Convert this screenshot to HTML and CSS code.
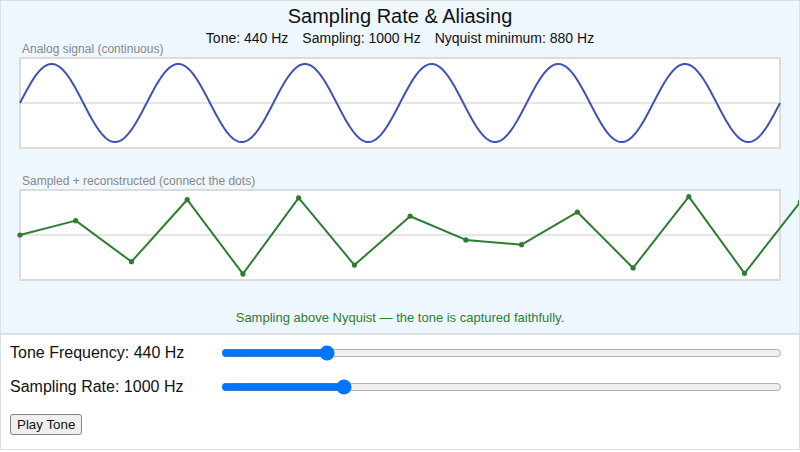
FILE: index.html
```html
<!DOCTYPE html>
<html lang="en">
<head>
  <meta charset="UTF-8" />
  <meta name="viewport" content="width=device-width, initial-scale=1.0"/>
  <title>Sampling Rate &amp; Aliasing</title>
  <link rel="stylesheet" href="styles.css">
</head>
<body>

<div class="app">
  <section class="scope">
    <h1 class="title">Sampling Rate &amp; Aliasing</h1>
    <div class="stats">
      <span>Tone: <span id="toneStat">440</span> Hz</span>
      <span>Sampling: <span id="rateStat">1000</span> Hz</span>
      <span>Nyquist minimum: <span id="nyqStat">880</span> Hz</span>
    </div>

    <div class="plot-label">Analog signal (continuous)</div>
    <svg class="plot" width="798" height="100" viewBox="0 0 798 100">
      <rect class="frame" x="19" y="3" width="760" height="90"/>
      <line class="axis" x1="20" y1="48" x2="778" y2="48"/>
      <path id="analogPath" class="analog" d=""/>
    </svg>

    <div class="plot-label second">Sampled + reconstructed (connect the dots)</div>
    <svg class="plot" width="798" height="100" viewBox="0 0 798 100">
      <rect class="frame" x="19" y="3" width="760" height="90"/>
      <line class="axis" x1="20" y1="48" x2="778" y2="48"/>
      <path id="sampledPath" class="sampled" d=""/>
      <g id="dots" class="dots"></g>
    </svg>

    <p id="verdict" class="verdict ok">Sampling above Nyquist — the tone is captured faithfully.</p>
  </section>

  <section class="controls">
    <div class="control">
      <label for="tone">Tone Frequency: <span id="toneLabel">440</span> Hz</label>
      <input type="range" id="tone" min="100" max="2000" step="10" value="440">
    </div>
    <div class="control">
      <label for="rate">Sampling Rate: <span id="rateLabel">1000</span> Hz</label>
      <input type="range" id="rate" min="200" max="4000" step="10" value="1000">
    </div>
    <button id="play" class="play">Play Tone</button>
  </section>
</div>

<script src="script.js"></script>
</body>
</html>
```

FILE: styles.css
```css
:root {
  --panel: #eef6fe;
  --line: #dcdfe2;
  --sine: #3f51b5;
  --good: #2e7d32;
  --bad: #c62828;
  --muted: #888;
}

* {
  box-sizing: border-box;
  margin: 0;
  padding: 0;
}

body {
  font-family: "Liberation Sans", Arial, sans-serif;
  color: #111;
  background: #fff;
}

.app {
  width: 800px;
  height: 450px;
  border: 1px solid var(--line);
}

.scope {
  height: 334px;
  padding-top: 3px;
  background: var(--panel);
  border-bottom: 2px solid var(--line);
}

.title {
  font-size: 20px;
  font-weight: normal;
  line-height: 24px;
  text-align: center;
}

.stats {
  display: flex;
  justify-content: center;
  gap: 14px;
  margin-top: 3px;
  font-size: 14px;
  line-height: 14px;
  color: #111;
}

.plot-label {
  margin: -2px 0 0 21px;
  font-size: 12px;
  line-height: 12px;
  color: var(--muted);
}

.plot-label.second {
  margin-top: 20px;
}

.plot {
  display: block;
  overflow: hidden;
}

.plot .frame {
  fill: #fff;
  stroke: #dcdcdc;
  stroke-width: 2;
}

.plot .axis {
  stroke: #e6e6e6;
  stroke-width: 2;
}

.plot .analog {
  fill: none;
  stroke: var(--sine);
  stroke-width: 2;
}

.plot .sampled {
  fill: none;
  stroke: var(--good);
  stroke-width: 2;
  stroke-linejoin: round;
}

.plot .dots circle {
  fill: var(--good);
}

.verdict {
  margin-top: 23px;
  font-size: 13px;
  line-height: 16px;
  text-align: center;
}

.verdict.ok {
  color: var(--good);
}

.verdict.bad {
  color: var(--bad);
}

.controls {
  display: flex;
  flex-direction: column;
  align-items: flex-start;
  gap: 12px;
  padding: 7px 17px 0 9px;
}

.control {
  display: flex;
  align-items: center;
  width: 100%;
  height: 22px;
}

.control label {
  flex-shrink: 0;
  width: 211px;
  font-size: 16px;
  line-height: 22px;
}

.control input {
  flex: 1;
}

.play {
  margin-top: 4px;
  padding: 2px 6px;
  font-family: "Liberation Sans", Arial, sans-serif;
  font-size: 13.33px;
  line-height: 15px;
  color: #111;
  background: #efefef;
  border: 1px solid #858585;
  border-radius: 3px;
  cursor: pointer;
}

.play:hover {
  background: #e5e5e5;
}
```

FILE: script.js
```js
const toneInput = document.getElementById("tone");
const rateInput = document.getElementById("rate");
const analogPath = document.getElementById("analogPath");
const sampledPath = document.getElementById("sampledPath");
const dots = document.getElementById("dots");
const verdict = document.getElementById("verdict");

// plot geometry (svg units)
const LEFT = 19;
const WIDTH = 760;
const MID = 48;
const AMP = 39;
const CYCLES = 6;

let audio = null;

function yAt(tone, t) {
  return MID - AMP * Math.sin(2 * Math.PI * tone * t);
}

function render() {
  const tone = Number(toneInput.value);
  const rate = Number(rateInput.value);
  const span = CYCLES / tone;

  document.getElementById("toneStat").textContent = tone;
  document.getElementById("rateStat").textContent = rate;
  document.getElementById("nyqStat").textContent = tone * 2;
  document.getElementById("toneLabel").textContent = tone;
  document.getElementById("rateLabel").textContent = rate;

  let d = "";
  for (let px = 0; px <= WIDTH; px++) {
    const t = (px / WIDTH) * span;
    d += (px ? "L" : "M") + (LEFT + px) + " " + yAt(tone, t).toFixed(2);
  }
  analogPath.setAttribute("d", d);

  let s = "";
  let circles = "";
  for (let n = 0; n / rate <= span + 1 / rate; n++) {
    const t = n / rate;
    const x = (LEFT + (t / span) * WIDTH).toFixed(2);
    const y = yAt(tone, t).toFixed(2);
    s += (n ? "L" : "M") + x + " " + y;
    circles += `<circle cx="${x}" cy="${y}" r="2.6"/>`;
  }
  sampledPath.setAttribute("d", s);
  dots.innerHTML = circles;

  if (rate >= tone * 2) {
    verdict.className = "verdict ok";
    verdict.textContent = "Sampling above Nyquist — the tone is captured faithfully.";
  } else {
    const alias = Math.abs(tone - rate * Math.round(tone / rate));
    verdict.className = "verdict bad";
    verdict.textContent = `Below Nyquist — aliasing! The ${tone} Hz tone shows up as ${alias} Hz.`;
  }
}

function playTone() {
  if (!audio) audio = new (window.AudioContext || window.webkitAudioContext)();
  const osc = audio.createOscillator();
  const gain = audio.createGain();
  osc.frequency.value = Number(toneInput.value);
  gain.gain.value = 0.2;
  osc.connect(gain).connect(audio.destination);
  osc.start();
  osc.stop(audio.currentTime + 1);
}

toneInput.addEventListener("input", render);
rateInput.addEventListener("input", render);
document.getElementById("play").addEventListener("click", playTone);

render();
```
